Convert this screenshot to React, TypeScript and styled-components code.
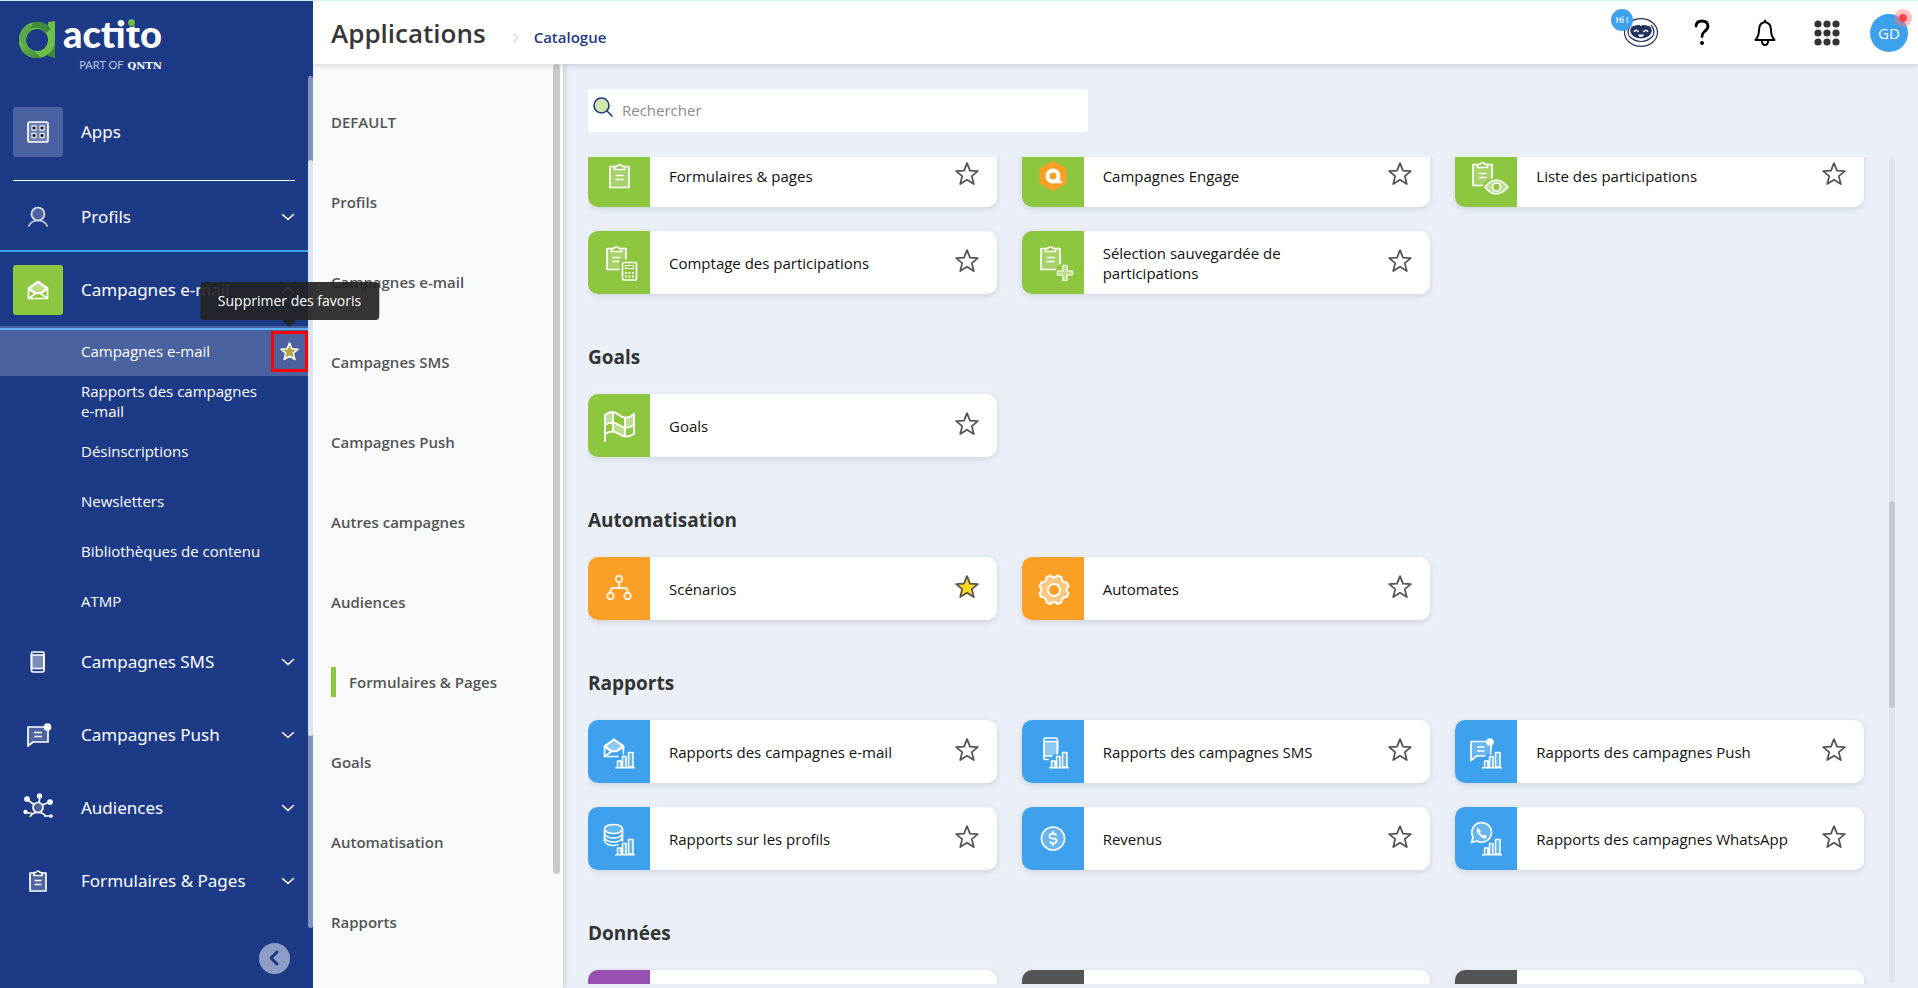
import React from "react";
import styled, { createGlobalStyle, css } from "styled-components";

const navy = "#1d3a87";
const green = "#8dc63f";
const orange = "#faa027";
const blue = "#3da1ed";
const purple = "#974fb0";
const grey = "#545454";

const GlobalStyle = createGlobalStyle`
  * { box-sizing: border-box; }
  body {
    margin: 0;
    font-family: "Open Sans", "Noto Sans", sans-serif;
    font-size: 15px;
    line-height: 20px;
    color: #111;
    background: #ebf0f8;
  }
  button { font: inherit; color: inherit; background: none; border: 0; padding: 0; cursor: pointer; }
  a { color: inherit; text-decoration: none; }
  svg { display: block; flex: none; }
  h1, h2, ul { margin: 0; padding: 0; }
  ul { list-style: none; }
`;

const Shell = styled.div`
  display: flex;
  height: 100vh;
  overflow: hidden;
  border-top: 1px solid #c9f2f8;
`;

/* Sidebar */

const Sidebar = styled.aside`
  position: relative;
  z-index: 5;
  display: flex;
  flex-direction: column;
  flex: none;
  width: 313px;
  background: ${navy};
  color: #fff;
`;

const Brand = styled.a`
  display: flex;
  flex: none;
  gap: 8px;
  height: 75px;
  padding: 12px 0 0 18px;
  > svg {
    margin-top: 7px;
  }
`;

const BrandText = styled.span`
  display: flex;
  flex-direction: column;
  gap: 4px;
  align-items: flex-end;
`;

const Wordmark = styled.span`
  font: 900 38px/41px Lato, sans-serif;
`;

const DottedI = styled.span`
  position: relative;
  &::after {
    content: "";
    position: absolute;
    left: 2px;
    top: 9px;
    width: 7px;
    height: 7px;
    border-radius: 50%;
    background: #6cbf4b;
    box-shadow: 0 0 0 1px ${navy};
  }
`;

const Tagline = styled.span`
  display: flex;
  gap: 4px;
  align-items: baseline;
  font: 400 11px/14px Lato, sans-serif;
  color: #b9c4e0;
  strong {
    font: 700 10px/14px "DejaVu Serif", serif;
    color: #fff;
  }
`;

const NavScroll = styled.div`
  display: flex;
  flex: 1;
  min-height: 0;
`;

const Nav = styled.nav`
  flex: 1;
`;

const SideTrack = styled.div`
  width: 5px;
  padding-top: 84px;
  border-radius: 3px;
  background: #8391bd;
`;

const SideThumb = styled.div`
  height: 75%;
  border-radius: 3px;
  background: #dfe3ef;
`;

const NavButton = styled.button<{ $variant?: "apps" | "open" }>`
  display: flex;
  align-items: center;
  gap: 18px;
  width: 100%;
  height: 73px;
  padding: 0 13px 2px;
  font: 400 17px/24px "Noto Sans", "Open Sans", sans-serif;
  text-align: left;
  ${(p) => p.$variant === "apps" && css`height: 104px; padding-top: 8px; padding-bottom: 0;`}
  ${(p) =>
    p.$variant === "open" &&
    css`
      height: 76px;
      margin-top: -4px;
      padding-top: 2px;
      padding-bottom: 0;
      border-top: 2px solid ${blue};
    `}
`;

const NavIcon = styled.span<{ $bg?: string }>`
  display: grid;
  place-items: center;
  width: 50px;
  height: 50px;
  border-radius: 3px;
  background: ${(p) => p.$bg ?? "transparent"};
`;

const NavLabel = styled.span`
  flex: 1;
  white-space: nowrap;
`;

const Rule = styled.hr`
  height: 1px;
  margin: 0 13px;
  border: 0;
  background: #fff;
`;

const SubItem = styled.li<{ $active?: boolean }>`
  display: flex;
  align-items: center;
  justify-content: space-between;
  height: 50px;
  padding-left: 81px;
  ${(p) =>
    p.$active &&
    css`
      background: linear-gradient(#5fb0f5, #5fb0f5) 0 2px / 100% 2px no-repeat #4b62a0;
    `}
  a {
    width: 185px;
  }
`;

const FavouriteButton = styled.button`
  position: relative;
  display: grid;
  place-items: center;
  width: 37px;
  height: 41px;
  border: 3px solid #f00;
`;

const Tooltip = styled.span`
  position: absolute;
  left: 50%;
  bottom: calc(100% + 14px);
  transform: translateX(-50%);
  padding: 9px 18px;
  border-radius: 4px;
  background: rgba(36, 36, 36, 0.92);
  color: #fff;
  font-size: 14px;
  line-height: 20px;
  white-space: nowrap;
  &::after {
    content: "";
    position: absolute;
    left: 50%;
    top: 100%;
    margin-left: -7px;
    border: 7px solid transparent;
    border-bottom: 0;
    border-top-color: #242428;
  }
`;

const SideFooter = styled.div`
  display: flex;
  flex: none;
  align-items: center;
  justify-content: flex-end;
  height: 60px;
  padding-right: 23px;
`;

const CollapseButton = styled.button`
  display: grid;
  place-items: center;
  width: 31px;
  height: 31px;
  border-radius: 50%;
  background: #8f9cc6;
`;

/* Header */

const Page = styled.div`
  display: flex;
  flex: 1;
  flex-direction: column;
  min-width: 0;
`;

const Header = styled.header`
  position: relative;
  z-index: 3;
  display: flex;
  flex: none;
  align-items: center;
  justify-content: space-between;
  height: 63px;
  padding: 0 10px 0 18px;
  background: #fff;
  box-shadow: 0 2px 6px rgba(60, 70, 80, 0.18);
`;

const Breadcrumb = styled.div`
  display: flex;
  align-items: baseline;
  a {
    color: ${navy};
    font-weight: 600;
  }
`;

const Title = styled.h1`
  color: #373737;
  font-size: 26px;
  font-weight: 600;
  line-height: 36px;
`;

const Crumb = styled.span`
  width: 48px;
  padding-left: 27px;
`;

const Tools = styled.div`
  display: flex;
  gap: 24px;
`;

const ToolButton = styled.button`
  position: relative;
  display: grid;
  place-items: center;
  width: 38px;
  height: 38px;
`;

const HiBadge = styled.span`
  position: absolute;
  left: -11px;
  top: -5px;
  width: 22px;
  height: 22px;
  border-radius: 50%;
  background: ${blue};
  color: #fff;
  font-size: 8px;
  font-weight: 600;
  line-height: 22px;
`;

const Avatar = styled(ToolButton)`
  border-radius: 50%;
  background: ${blue};
  color: #fff;
`;

const AlertDot = styled.span`
  position: absolute;
  right: -4px;
  top: -5px;
  width: 18px;
  height: 18px;
  border: 5px solid rgba(255, 120, 120, 0.45);
  border-radius: 50%;
  background: #ff4343;
  background-clip: padding-box;
`;

/* Category list */

const Body = styled.div`
  display: flex;
  flex: 1;
  min-height: 0;
`;

const Categories = styled.nav`
  position: relative;
  z-index: 2;
  display: flex;
  flex: none;
  width: 250px;
  padding-right: 3px;
  background: #f8fafc;
  box-shadow: 2px 0 5px rgba(60, 70, 80, 0.18);
  ul {
    flex: 1;
    padding: 18px 0 0 18px;
  }
`;

const Category = styled.li<{ $active?: boolean }>`
  display: flex;
  align-items: center;
  height: 80px;
  color: #545454;
  font-weight: 600;
  white-space: nowrap;
  ${(p) =>
    p.$active &&
    css`
      &::before {
        content: "";
        width: 5px;
        height: 30px;
        margin-right: 13px;
        background: ${green};
      }
    `}
`;

const CategoryThumb = styled.div`
  width: 7px;
  height: 810px;
  border-radius: 4px;
  background: #c8cac9;
`;

/* Catalogue */

const Main = styled.main`
  display: flex;
  flex: 1;
  flex-direction: column;
  gap: 25px;
  min-width: 0;
  padding: 25px 23px 4px 25px;
`;

const Search = styled.label`
  display: flex;
  flex: none;
  gap: 6px;
  width: 500px;
  height: 43px;
  padding-left: 4px;
  border-radius: 4px;
  background: #fff;
  svg {
    margin-top: 7px;
  }
  input {
    flex: 1;
    border: 0;
    outline: 0;
    background: none;
    padding: 0 0 2px;
    font: inherit;
  }
  input::placeholder {
    color: #8b8b8b;
    opacity: 1;
  }
`;

const Viewport = styled.div`
  display: flex;
  flex: 1;
  min-height: 0;
  overflow: hidden;
`;

const Catalogue = styled.div`
  flex: 1;
  margin-top: -13px;
  padding-right: 25px;
`;

const MainTrack = styled.div`
  width: 6px;
  padding-top: 344px;
  border-radius: 3px;
  background: #e3e4e5;
`;

const MainThumb = styled.div`
  height: 207px;
  border-radius: 3px;
  background: #c6c8c9;
`;

const SectionTitle = styled.h2`
  margin: 50px 0 24px;
  color: #333;
  font-size: 19px;
  font-weight: 700;
  line-height: 26px;
`;

const Grid = styled.div`
  display: grid;
  grid-template-columns: repeat(3, minmax(0, 1fr));
  gap: 24px 25px;
`;

const Card = styled.article`
  display: flex;
  align-items: center;
  height: 63px;
  padding-right: 18px;
  overflow: hidden;
  border-radius: 10px;
  background: #fff;
  box-shadow: 0 2px 6px rgba(80, 90, 100, 0.18);
`;

const Tile = styled.span<{ $bg: string }>`
  flex: none;
  width: 62px;
  height: 63px;
  background: ${(p) => p.$bg};
`;

const CardName = styled.a`
  flex: 1;
  padding: 0 23px 0 19px;
`;

const StarButton = styled.button`
  margin-bottom: 3px;
`;

/* Icons */

const Star = ({ fill = "none", stroke = "#555", size = 24 }: { fill?: string; stroke?: string; size?: number }) => (
  <svg width={size} height={size} viewBox="0 0 24 24" fill={fill} stroke={stroke} strokeWidth={size < 24 ? 2 : 1.8} strokeLinejoin="round">
    <path d="M12 1.2l3 7.4 7.8.5-6 5 2 8-6.8-4.3-6.8 4.3 2-8-6-5 7.8-.5z" />
  </svg>
);

const Chevron = ({ up }: { up?: boolean }) => (
  <svg width="14" height="14" viewBox="0 0 14 14" fill="none" stroke="#fff" strokeWidth="1.6" strokeLinecap="round" strokeLinejoin="round">
    <path d={up ? "M1.5 9.5L7 4.5l5.5 5" : "M1.5 4.5L7 9.5l5.5-5"} />
  </svg>
);

const LogoMark = () => (
  <svg width="37" height="38" viewBox="0 0 37 38">
    <defs>
      <linearGradient id="ring" x1="0" y1="0" x2="1" y2="1">
        <stop offset="0" stopColor="#6cbf4b" />
        <stop offset="1" stopColor="#3f8a3c" />
      </linearGradient>
    </defs>
    <path d="M30 2l7-1v37l-7-2.500z" fill="#6cbf4b" />
    <path d="M30 28l7-7v17l-7-2.500z" fill="#3f8a3c" />
    <circle cx="19" cy="20" r="14.500" fill="none" stroke="#6cbf4b" strokeWidth="7" />
    <path d="M15 2.500Q27 0 33 9l-5 4Q22 6 12 8.500z" fill="#3f8a3c" />
    <path d="M1 18Q2 9 10 4l4 6q-6 4-6 10 0 8 8 12l-4 5Q1 33 1 20z" fill="#58a845" />
    <path d="M1 21l7 4q2 5 9 6.500l6 6.500Q5 40 1 21z" fill="url(#ring)" />
  </svg>
);

const Svg = ({ w = 30, h = 30, children }: { w?: number; h?: number; children: React.ReactNode }) => (
  <svg width={w} height={h} viewBox={`0 0 ${w} ${h}`} fill="none" stroke="#fff" strokeWidth="1.7" strokeLinejoin="round">
    {children}
  </svg>
);

const tint = "rgba(255,255,255,0.22)";
const tintStrong = "rgba(255,255,255,0.42)";

const AppsIcon = () => (
  <Svg>
    <rect x="5" y="5" width="20" height="20" rx="2" fill="rgba(255,255,255,.2)" />
    {[9, 17].map((x) =>
      [9, 16.5].map((y) => <rect key={`${x}-${y}`} x={x} y={y} width="4" height="4" fill="#000" stroke="#dfe4f0" strokeWidth="1.3" />)
    )}
  </Svg>
);

const ProfileIcon = () => (
  <Svg>
    <circle cx="15" cy="12" r="6.500" fill={tint} stroke="#dfe4f0" />
    <path d="M5.500 24.500Q8 18.500 15 18.500T24.500 24.500" stroke="#dfe4f0" />
  </Svg>
);

const MailIcon = () => (
  <Svg>
    <path d="M5.500 13L15 6.500l9.500 6.500v10.500h-19z" />
    <path d="M6 13.500L15 7l9 6.500-6 4.500h-6z" fill={tintStrong} />
    <path d="M5.500 14l7 4.500h5l7-4.500M5.500 23.500l7-5M24.500 23.500l-7-5" />
  </Svg>
);

const PhoneIcon = () => (
  <Svg>
    <rect x="8.500" y="5" width="12.500" height="20" rx="1.500" />
    <path d="M8.500 8h12.500v13.500H8.500z" fill={tintStrong} />
  </Svg>
);

const PushIcon = () => (
  <Svg>
    <path d="M5 7h20v15H10l-5 4z" fill={tint} />
    <path d="M11 12.500h8M11 16.500h8" />
    <circle cx="24.500" cy="7" r="3" fill="#fff" />
  </Svg>
);

const AudienceIcon = () => (
  <Svg>
    <circle cx="15" cy="14.500" r="5" fill={tint} />
    <path d="M7 24Q9 19.500 15 19.500T23 24M16 9.500l1-6M11 11.500L4 6.500M19.500 12l7-3M9.500 20.500L3 19.500M21 23h7" />
    {[[4, 6, 2], [16.5, 3, 1.8], [27, 9, 2], [2.5, 19, 1.3], [28, 23, 1]].map(([x, y, r]) => (
      <circle key={`${x}`} cx={x} cy={y} r={r} fill="#fff" />
    ))}
  </Svg>
);

const FormIcon = () => (
  <Svg>
    <rect x="7" y="7" width="16" height="18" fill={tint} />
    <path d="M11 9.500v-3h2q2-3 4 0h2v3z" fill={navy} />
    <path d="M11.500 14.500h7M11.500 18.500h7" />
  </Svg>
);

const Bars = ({ bg }: { bg: string }) => (
  <>
    <path d="M28 48V40h4v-4h6v-5h8v17z" fill={bg} stroke={bg} strokeWidth="3" />
    <path d="M29.500 47v-6h3.500v6M34.500 47V36.500H38V47M40.500 47V32.500h4.500V47z" fill={tint} strokeWidth="1.500" />
    <path d="M27 47.800h20" strokeWidth="1.500" />
  </>
);

const Clipboard = ({ x, y, bg = green }: { x: number; y: number; bg?: string }) => (
  <g transform={`translate(${x} ${y})`}>
    <path d="M0 2.500h19v21H0z" fill={tint} />
    <path d="M4.500 5.500v-3h2.500q2.500-4 5 0h2.500v3z" fill={bg} />
    <path d="M5.500 11.500h8M5.500 15.500h8" />
  </g>
);

const TileArt: Record<string, React.ReactNode> = {
  form: <Clipboard x={22} y={20} />,
  engage: (
    <>
      <path d="M31 18l12.500 7v14L31 46l-12.500-7V25z" fill={orange} stroke={orange} strokeWidth="2" />
      <circle cx="31" cy="32" r="5.500" strokeWidth="4" />
      <path d="M35 34l4.500 4.500h-6z" fill="#fff" />
    </>
  ),
  list: (
    <>
      <Clipboard x={18} y={18} />
      <ellipse cx="41" cy="43" rx="13" ry="9" fill={green} stroke="none" />
      <path d="M30 43q11-14 23 0-12 14-23 0z" fill={tintStrong} />
      <circle cx="41.500" cy="43" r="4" fill={green} />
    </>
  ),
  count: (
    <>
      <Clipboard x={19} y={15} />
      <rect x="31.500" y="28.500" width="20" height="23" fill={green} stroke="none" />
      <rect x="34.500" y="31.500" width="14" height="17.500" rx="1" />
      <path d="M37.500 34.500h8v3h-8z" strokeWidth="1.200" />
      <path d="M37 42h9M37 45.500h9" strokeDasharray="1.800 1.700" strokeWidth="1.800" />
    </>
  ),
  selection: (
    <>
      <Clipboard x={19} y={15} />
      <circle cx="43" cy="42" r="10" fill={green} stroke="none" />
      <path d="M41 34.500h4v5.500h5.500v4H45v5.500h-4V44h-5.500v-4H41z" fill={tintStrong} stroke="#e3f0cf" />
    </>
  ),
  flag: (
    <g strokeWidth="2">
      <path d="M17 48V21q7-6 14 0t15-1v20q-8 5-15 0t-14 0" />
      <path d="M25 18v20M37 23v20M17 31q7-5 14 0t15 0" />
      <path d="M18 21q3-3 7-3v11q-4 0-7 1zM37 23q5 0 9-3v11q-4 2-9 1zM25 29q4 0 6 2t6 2v9q-4 0-6-2t-6-2z" fill={tintStrong} stroke="none" />
    </g>
  ),
  scenario: (
    <g strokeWidth="1.900" stroke="#fff3e0">
      <circle cx="31" cy="22" r="3.200" />
      <circle cx="22.500" cy="39" r="3.200" />
      <circle cx="39.500" cy="39" r="3.200" />
      <path d="M31 25.500v5.500M22.500 35.500V34q0-3 3-3h11q3 0 3 3v1.500" />
    </g>
  ),
  gear: (
    <>
      <path
        d="M28.500 18.500q3.500 4 7 0l4 1.700q0 5.300 5.300 5.300l1.700 4q-4 3 0 6.500l-1.700 4q-5.300 0-5.300 5.300l-4 1.700q-3.500-4-7 0l-4-1.700q0-5.300-5.300-5.300l-1.700-4q4-3.500 0-6.500l1.700-4q5.300 0 5.300-5.300z"
        fill={tintStrong}
        strokeWidth="2"
      />
      <circle cx="32" cy="33" r="6" fill={orange} strokeWidth="2" />
    </>
  ),
  mailReport: (
    <>
      <path d="M16.500 26L26 19.500l9.500 6.500v10.500h-19z" />
      <path d="M17 26l9-6.500 9 6.500-6.500 5h-5z" fill={tintStrong} />
      <path d="M16.500 27l7 4.500h5l7-4.500M16.500 36.500l7-5" />
      <Bars bg={blue} />
    </>
  ),
  smsReport: (
    <>
      <rect x="22" y="18" width="13.500" height="21.500" rx="1.500" />
      <path d="M22 21.500h13.500v14.500H22z" fill={tintStrong} />
      <Bars bg={blue} />
    </>
  ),
  pushReport: (
    <>
      <path d="M16 21.500h20V36H21.500L16 40.500z" fill={tint} />
      <path d="M22 27h7.500M22 31h7.500" />
      <circle cx="35" cy="22" r="3" fill="#fff" />
      <Bars bg={blue} />
    </>
  ),
  dbReport: (
    <>
      <ellipse cx="25.500" cy="22" rx="9" ry="4.500" fill={tint} />
      <path d="M16.500 22v12q2 4.500 9 4.500t9-4.500V22M16.500 26.500q2 4.500 9 4.500t9-4.500M16.500 30.500q2 4.500 9 4.500t9-4.500" />
      <Bars bg={blue} />
    </>
  ),
  revenue: (
    <>
      <circle cx="31" cy="31.500" r="11.500" fill={tint} />
      <path d="M34.500 28.500q-1-2-3.500-2t-3.500 2.300 3.500 2.700 3.500 2.700-3.500 2.300-3.500-2M31 24v2.500M31 36.500V39" strokeWidth="1.800" />
    </>
  ),
  whatsapp: (
    <>
      <path d="M16.500 35.500l1.500-5.500a9.800 9.800 0 1 1 4 4z" fill={tint} />
      <path d="M23 20.500q-2.500 2 0 6t7 5.500l2-2.500-3-2-1.500 1q-2-1-2.500-3l1-1z" fill="#fff" stroke="none" />
      <Bars bg={blue} />
    </>
  ),
};

const RobotIcon = () => (
  <svg width="36" height="30" viewBox="0 0 36 30" fill="none" stroke="#24305e">
    <ellipse cx="18" cy="14.500" rx="16.500" ry="13.800" strokeWidth="1.200" />
    <path d="M8 7Q3 13 6.500 18.500q5 5 11.500 5t11.500-5Q33 13 28 7" strokeWidth="1.200" />
    <path d="M9 9Q18 5.500 27 9q3 4.500-1 8.500-8 5-16 0-4-4-1-8.500z" fill="#24305e" />
    <path d="M11 14q2-3.500 4.500 0M20.500 14q2.500-3.500 4.500 0" stroke="#fff" strokeWidth="1.500" />
    <path d="M15 16.500h6q-.5 2.500-3 2.500t-3-2.500z" fill="#fff" stroke="none" />
    <path d="M18 5v3" stroke="#fff" strokeWidth="1.500" />
  </svg>
);

const QuestionIcon = () => (
  <svg width="20" height="28" viewBox="0 0 20 28" fill="none" stroke="#000" strokeWidth="2.800" strokeLinecap="round">
    <path d="M3 7q.5-5 6-5t6 5q0 3-3.500 5.500-2.500 2-2.500 5" />
    <circle cx="9" cy="24" r="2" fill="#000" stroke="none" />
  </svg>
);

const BellIcon = () => (
  <svg width="22" height="28" viewBox="0 0 22 28" fill="none" stroke="#000" strokeWidth="2" strokeLinejoin="round">
    <path d="M11 3q6 1 6 8 0 6 3.500 10H1.500Q5 17 5 11q0-7 6-8z" />
    <path d="M8 22q0 4 3 4t3-4M11 1.500V3" strokeLinecap="round" />
  </svg>
);

const DotsIcon = () => (
  <svg width="26" height="26" viewBox="0 0 26 26" fill="#333">
    {[4, 13, 22].map((x) => [4, 13, 22].map((y) => <circle key={`${x}-${y}`} cx={x} cy={y} r="3.600" />))}
  </svg>
);

/* Data */

const submenu = ["Campagnes e-mail", "Rapports des campagnes e-mail", "Désinscriptions", "Newsletters", "Bibliothèques de contenu", "ATMP"];

const closedGroups = [
  { name: "Campagnes SMS", icon: <PhoneIcon /> },
  { name: "Campagnes Push", icon: <PushIcon /> },
  { name: "Audiences", icon: <AudienceIcon /> },
  { name: "Formulaires & Pages", icon: <FormIcon /> },
];

const categories = [
  "DEFAULT",
  "Profils",
  "Campagnes e-mail",
  "Campagnes SMS",
  "Campagnes Push",
  "Autres campagnes",
  "Audiences",
  "Formulaires & Pages",
  "Goals",
  "Automatisation",
  "Rapports",
];

type App = { name?: string; art?: string; favourite?: boolean; bg?: string };

const sections: { title?: string; bg: string; apps: App[] }[] = [
  {
    bg: green,
    apps: [
      { name: "Formulaires & pages", art: "form" },
      { name: "Campagnes Engage", art: "engage" },
      { name: "Liste des participations", art: "list" },
      { name: "Comptage des participations", art: "count" },
      { name: "Sélection sauvegardée de participations", art: "selection" },
    ],
  },
  { title: "Goals", bg: green, apps: [{ name: "Goals", art: "flag" }] },
  {
    title: "Automatisation",
    bg: orange,
    apps: [
      { name: "Scénarios", art: "scenario", favourite: true },
      { name: "Automates", art: "gear" },
    ],
  },
  {
    title: "Rapports",
    bg: blue,
    apps: [
      { name: "Rapports des campagnes e-mail", art: "mailReport" },
      { name: "Rapports des campagnes SMS", art: "smsReport" },
      { name: "Rapports des campagnes Push", art: "pushReport" },
      { name: "Rapports sur les profils", art: "dbReport" },
      { name: "Revenus", art: "revenue" },
      { name: "Rapports des campagnes WhatsApp", art: "whatsapp" },
    ],
  },
  { title: "Données", bg: grey, apps: [{ bg: purple }, {}, {}] },
];

const AppCard = ({ app, bg }: { app: App; bg: string }) => (
  <Card>
    <Tile $bg={app.bg ?? bg}>{app.art && <Svg w={62} h={63}>{TileArt[app.art]}</Svg>}</Tile>
    {app.name && (
      <>
        <CardName href="#">{app.name}</CardName>
        <StarButton aria-label="Favori">
          <Star fill={app.favourite ? "#ffd91a" : "none"} />
        </StarButton>
      </>
    )}
  </Card>
);

export default function App() {
  return (
    <>
      <GlobalStyle />
      <Shell>
        <Sidebar>
          <Brand href="#">
            <LogoMark />
            <BrandText>
              <Wordmark>
                act<DottedI>i</DottedI>to
              </Wordmark>
              <Tagline>
                PART OF <strong>QNTN</strong>
              </Tagline>
            </BrandText>
          </Brand>
          <NavScroll>
            <Nav>
              <NavButton $variant="apps">
                <NavIcon $bg="#4b62a0"><AppsIcon /></NavIcon>
                <NavLabel>Apps</NavLabel>
              </NavButton>
              <Rule />
              <NavButton>
                <NavIcon><ProfileIcon /></NavIcon>
                <NavLabel>Profils</NavLabel>
                <Chevron />
              </NavButton>
              <NavButton $variant="open">
                <NavIcon $bg={green}><MailIcon /></NavIcon>
                <NavLabel>Campagnes e-mail</NavLabel>
                <Chevron up />
              </NavButton>
              <ul>
                {submenu.map((name, i) => (
                  <SubItem key={name} $active={i === 0}>
                    <a href="#">{name}</a>
                    {i === 0 && (
                      <FavouriteButton>
                        <Star fill="#b5a642" stroke="#fff" size={19} />
                        <Tooltip role="tooltip">Supprimer des favoris</Tooltip>
                      </FavouriteButton>
                    )}
                  </SubItem>
                ))}
              </ul>
              {closedGroups.map((g) => (
                <NavButton key={g.name}>
                  <NavIcon>{g.icon}</NavIcon>
                  <NavLabel>{g.name}</NavLabel>
                  <Chevron />
                </NavButton>
              ))}
            </Nav>
            <SideTrack>
              <SideThumb />
            </SideTrack>
          </NavScroll>
          <SideFooter>
            <CollapseButton aria-label="Réduire le menu">
              <svg width="16" height="18" viewBox="0 0 16 18" fill="none" stroke={navy} strokeWidth="3" strokeLinecap="round" strokeLinejoin="round">
                <path d="M10 3L4 9l6 6" />
              </svg>
            </CollapseButton>
          </SideFooter>
        </Sidebar>
        <Page>
          <Header>
            <Breadcrumb>
              <Title>Applications</Title>
              <Crumb>
                <svg width="7" height="10" viewBox="0 0 7 10" fill="none" stroke="#d5d5d5" strokeWidth="1.200">
                  <path d="M1 1l4 4-4 4" />
                </svg>
              </Crumb>
              <a href="#">Catalogue</a>
            </Breadcrumb>
            <Tools>
              <ToolButton aria-label="Assistant">
                <RobotIcon />
                <HiBadge>Hi !</HiBadge>
              </ToolButton>
              <ToolButton aria-label="Aide"><QuestionIcon /></ToolButton>
              <ToolButton aria-label="Notifications"><BellIcon /></ToolButton>
              <ToolButton aria-label="Applications"><DotsIcon /></ToolButton>
              <Avatar>
                GD
                <AlertDot />
              </Avatar>
            </Tools>
          </Header>
          <Body>
            <Categories>
              <ul>
                {categories.map((c) => (
                  <Category key={c} $active={c === "Formulaires & Pages"}>
                    <a href="#">{c}</a>
                  </Category>
                ))}
              </ul>
              <CategoryThumb />
            </Categories>
            <Main>
              <Search>
                <svg width="24" height="24" viewBox="0 0 24 24" stroke={navy} strokeWidth="1.600" strokeLinecap="round">
                  <circle cx="9.500" cy="9.500" r="7.500" fill="#cfe6ae" />
                  <path d="M15 15l5 5" />
                </svg>
                <input type="text" placeholder="Rechercher" aria-label="Rechercher" />
              </Search>
              <Viewport>
                <Catalogue>
                  {sections.map((s) => (
                    <section key={s.title ?? "forms"}>
                      {s.title && <SectionTitle>{s.title}</SectionTitle>}
                      <Grid>
                        {s.apps.map((app, i) => (
                          <AppCard key={i} app={app} bg={s.bg} />
                        ))}
                      </Grid>
                    </section>
                  ))}
                </Catalogue>
                <MainTrack>
                  <MainThumb />
                </MainTrack>
              </Viewport>
            </Main>
          </Body>
        </Page>
      </Shell>
    </>
  );
}
